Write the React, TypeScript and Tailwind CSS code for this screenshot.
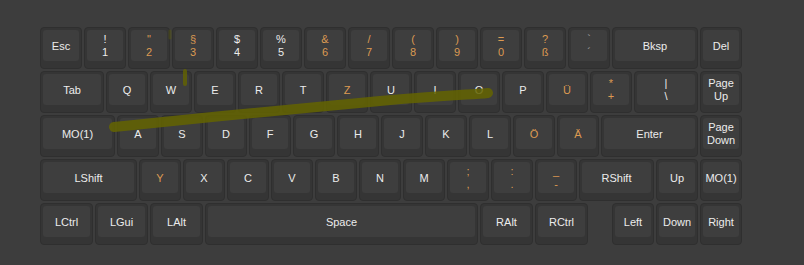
import React from 'react';

type KeyDef = {
  t?: string; // top legend
  b?: string; // bottom / main legend
  w?: number; // width in units
  o?: boolean; // orange legend
  dim?: boolean; // grey legend
  gap?: boolean; // empty spacer
};

const U = 44;

const rows: KeyDef[][] = [
  [
    { b: 'Esc' },
    { t: '!', b: '1' },
    { t: '"', b: '2', o: true },
    { t: '§', b: '3', o: true },
    { t: '$', b: '4' },
    { t: '%', b: '5' },
    { t: '&', b: '6', o: true },
    { t: '/', b: '7', o: true },
    { t: '(', b: '8', o: true },
    { t: ')', b: '9', o: true },
    { t: '=', b: '0', o: true },
    { t: '?', b: 'ß', o: true },
    { t: '`', b: '´', dim: true },
    { b: 'Bksp', w: 2 },
    { b: 'Del' },
  ],
  [
    { b: 'Tab', w: 1.5 },
    { b: 'Q' },
    { b: 'W' },
    { b: 'E' },
    { b: 'R' },
    { b: 'T' },
    { b: 'Z', o: true },
    { b: 'U' },
    { b: 'I' },
    { b: 'O' },
    { b: 'P' },
    { b: 'Ü', o: true },
    { t: '*', b: '+', o: true },
    { t: '|', b: '\\', w: 1.5 },
    { t: 'Page', b: 'Up' },
  ],
  [
    { b: 'MO(1)', w: 1.75 },
    { b: 'A' },
    { b: 'S' },
    { b: 'D' },
    { b: 'F' },
    { b: 'G' },
    { b: 'H' },
    { b: 'J' },
    { b: 'K' },
    { b: 'L' },
    { b: 'Ö', o: true },
    { b: 'Ä', o: true },
    { b: 'Enter', w: 2.25 },
    { t: 'Page', b: 'Down' },
  ],
  [
    { b: 'LShift', w: 2.25 },
    { b: 'Y', o: true },
    { b: 'X' },
    { b: 'C' },
    { b: 'V' },
    { b: 'B' },
    { b: 'N' },
    { b: 'M' },
    { t: ';', b: ',', o: true },
    { t: ':', b: '.', o: true },
    { t: '_', b: '-', o: true },
    { b: 'RShift', w: 1.75 },
    { b: 'Up' },
    { b: 'MO(1)' },
  ],
  [
    { b: 'LCtrl', w: 1.25 },
    { b: 'LGui', w: 1.25 },
    { b: 'LAlt', w: 1.25 },
    { b: 'Space', w: 6.25 },
    { b: 'RAlt', w: 1.25 },
    { b: 'RCtrl', w: 1.25 },
    { gap: true, w: 0.5 },
    { b: 'Left' },
    { b: 'Down' },
    { b: 'Right' },
  ],
];

const Key = ({ k }: { k: KeyDef }) => {
  const width = (k.w ?? 1) * U;
  if (k.gap) return <div style={{ width }} className="h-[44px] shrink-0" />;

  const color = k.o ? 'text-[#dc9a52]' : k.dim ? 'text-[#a8a8a8]' : 'text-[#ececec]';

  return (
    <div style={{ width }} className="h-[44px] shrink-0 p-[1px]">
      <div className="h-full rounded-[4px] border border-[#2f2f2f] bg-[#353535] px-[2px] pb-[7px] pt-[2px]">
        <div className="flex h-full flex-col items-center justify-center rounded-[3px] bg-[#3e3e3e] pt-[1px] text-[11px] leading-[13px]">
          {k.t && <span className={color}>{k.t}</span>}
          <span className={color}>{k.b}</span>
        </div>
      </div>
    </div>
  );
};

export default function App() {
  return (
    <div
      className="relative h-[265px] w-[804px] overflow-hidden bg-[#3d3d3d] pl-[39px] pt-[26px]"
      style={{ fontFamily: '"Liberation Sans", Arial, sans-serif' }}
    >
      <div className="flex flex-col">
        {rows.map((row, i) => (
          <div key={i} className="flex">
            {row.map((k, j) => (
              <Key key={j} k={k} />
            ))}
          </div>
        ))}
      </div>

      {/* highlighter scribble over the keys */}
      <svg className="pointer-events-none absolute left-0 top-0" width={804} height={265}>
        <path
          d="M114 127 C 200 118, 300 108, 380 101 S 470 95, 488 93"
          fill="none"
          stroke="#646400"
          strokeOpacity={0.85}
          strokeWidth={10}
          strokeLinecap="round"
        />
        <path d="M185 71 L185 84" stroke="#646400" strokeOpacity={0.8} strokeWidth={4} strokeLinecap="round" />
        <path d="M170 31 L170 38" stroke="#646400" strokeOpacity={0.35} strokeWidth={3} strokeLinecap="round" />
      </svg>
    </div>
  );
}
